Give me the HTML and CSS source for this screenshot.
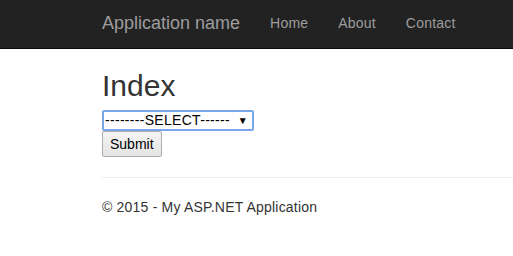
FILE: index.html
```html
<!DOCTYPE html>
<html lang="en">
<head>
  <meta charset="UTF-8">
  <meta name="viewport" content="width=device-width, initial-scale=1.0">
  <title>Index - My ASP.NET Application</title>
  <link rel="stylesheet" href="styles.css">
</head>
<body>
  <div class="navbar">
    <div class="container nav-row">
      <a class="navbar-brand" href="#">Application name</a>
      <ul class="nav">
        <li><a href="#">Home</a></li>
        <li><a href="#">About</a></li>
        <li><a href="#">Contact</a></li>
      </ul>
    </div>
  </div>

  <div class="container body-content">
    <h2>Index</h2>
    <form>
      <div class="select-box">
        <span>--------SELECT------</span>
        <span class="arrow">&#9660;</span>
      </div>
      <button type="button" class="submit">Submit</button>
    </form>
    <hr>
    <footer>
      <p>&copy; 2015 - My ASP.NET Application</p>
    </footer>
  </div>
</body>
</html>
```

FILE: styles.css
```css
body {
  margin: 0;
  font-family: "Liberation Sans", Arial, sans-serif;
  font-size: 14px;
  line-height: 1.42857;
  color: #333;
  background-color: #fff;
}

.container {
  padding-left: 102px;
}

.navbar {
  background-color: #222;
  border-bottom: 1px solid #080808;
  height: 48px;
}

.nav-row {
  display: flex;
  align-items: center;
  height: 48px;
}

.navbar-brand {
  color: #9d9d9d;
  font-size: 18px;
  text-decoration: none;
}

.nav {
  display: flex;
  list-style: none;
  margin: 0 0 0 15px;
  padding: 0;
}

.nav a {
  display: block;
  padding: 0 15px;
  color: #9d9d9d;
  text-decoration: none;
  letter-spacing: 0.2px;
}

h2 {
  font-size: 30px;
  font-weight: 500;
  line-height: 1.1;
  margin: 20px 0 8px;
}

.select-box {
  width: 145px;
  height: 17px;
  border: 2px solid #7aa7e8;
  border-radius: 2px;
  display: flex;
  justify-content: space-between;
  align-items: center;
  padding: 0 2px 0 1px;
  font-size: 14px;
  letter-spacing: 0.3px;
  color: #000;
  line-height: 17px;
}

.arrow {
  font-size: 10px;
  padding-right: 2px;
}

.submit {
  display: block;
  font-family: inherit;
  font-size: 14px;
  color: #000;
  background: linear-gradient(#f4f4f4, #e4e4e4);
  border: 1px solid #adadad;
  border-radius: 2px;
  height: 26px;
  padding: 0 7px;
  margin-top: 0;
}

hr {
  margin: 20px 0 0;
  border: 0;
  border-top: 1px solid #eee;
}

footer p {
  margin: 20px 0;
  letter-spacing: 0.2px;
}
```
